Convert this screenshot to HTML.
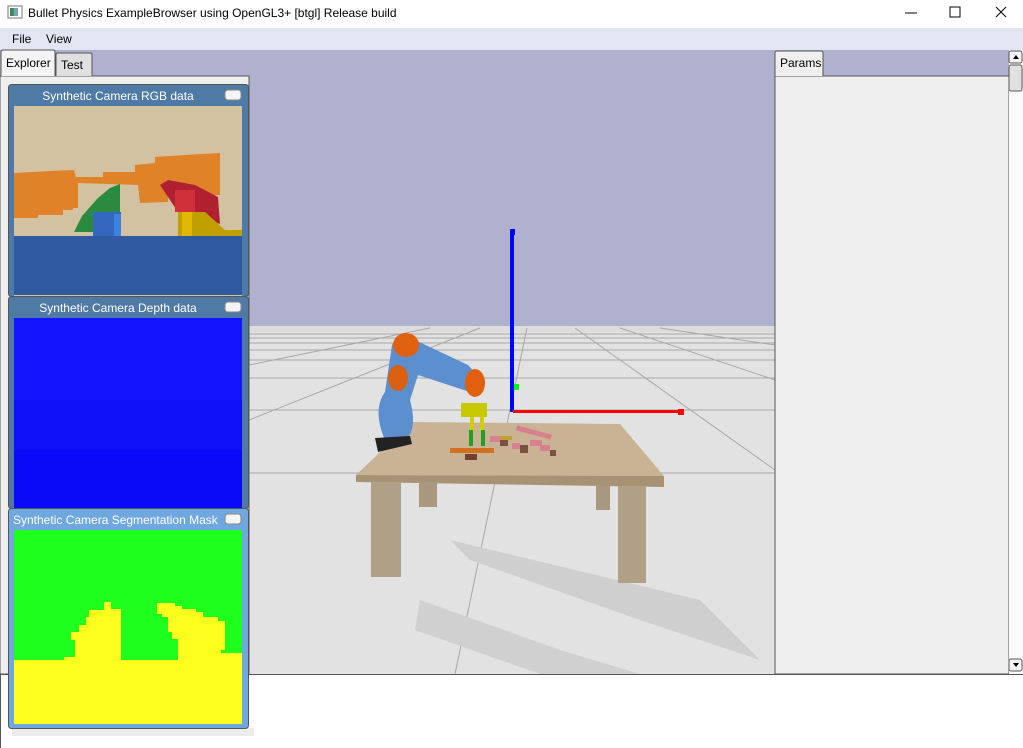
<!DOCTYPE html>
<html><head><meta charset="utf-8"><style>
html,body{margin:0;padding:0;width:1023px;height:748px;overflow:hidden;background:#fff;font-family:"Liberation Sans","Noto Sans CJK KR",sans-serif}
svg{display:block}
text{font-family:"Liberation Sans","Noto Sans CJK KR",sans-serif}
</style></head><body>
<svg width="1023" height="748" viewBox="0 0 1023 748" xmlns="http://www.w3.org/2000/svg">
<rect x="0" y="0" width="1023" height="28" fill="#fff"/>
<rect x="8" y="6" width="14" height="12" fill="#fff" stroke="#777"/>
<rect x="10" y="8" width="4" height="8" fill="#3a8a5a"/><rect x="14" y="8" width="4" height="8" fill="#7aa0c0"/>
<text x="28" y="17" font-size="12" fill="#000">Bullet Physics ExampleBrowser using OpenGL3+ [btgl] Release build</text>
<line x1="905" y1="13" x2="917" y2="13" stroke="#000"/>
<rect x="950" y="7" width="10" height="10" fill="none" stroke="#000"/>
<path d="M996 7 L1006 17 M1006 7 L996 17" stroke="#000"/>
<rect x="0" y="28" width="1023" height="22" fill="#e3e6f2"/>
<text x="12" y="43" font-size="12">File</text>
<text x="46" y="43" font-size="12">View</text>
<rect x="0" y="50" width="1023" height="624" fill="#b0b0cf"/>
<polygon points="249,328 775,328 775,674 249,674" fill="#e2e2e2"/>
<rect x="249" y="326" width="526" height="6" fill="#dcdcdc"/>
<g stroke="#a8a8a8" stroke-width="1">
<line x1="249" y1="334" x2="775" y2="334"/><line x1="249" y1="338" x2="775" y2="338"/><line x1="249" y1="343" x2="775" y2="343"/>
<line x1="249" y1="350" x2="775" y2="350"/><line x1="249" y1="360" x2="775" y2="360"/><line x1="249" y1="378" x2="775" y2="378"/>
<line x1="249" y1="410" x2="775" y2="410"/><line x1="249" y1="473" x2="775" y2="473"/>
<line x1="527" y1="328" x2="455" y2="674"/><line x1="575" y1="328" x2="775" y2="470"/>
<line x1="620" y1="328" x2="775" y2="380"/><line x1="480" y1="328" x2="249" y2="420"/>
<line x1="430" y1="328" x2="249" y2="365"/><line x1="660" y1="328" x2="775" y2="345"/>
</g>
<polygon points="450,540 700,600 760,660 640,620 470,560" fill="#cfcfcf"/>
<polygon points="420,600 560,650 640,674 540,674 415,630" fill="#d0d0d0"/>
<polygon points="412,422 620,424 664,476 356,475" fill="#c9b394"/>
<polygon points="356,475 664,476 664,487 356,482" fill="#a89274"/>
<rect x="371" y="482" width="30" height="95" fill="#b0a088"/>
<rect x="618" y="486" width="28" height="97" fill="#b0a088"/>
<rect x="419" y="482" width="18" height="25" fill="#a89880"/>
<rect x="596" y="486" width="14" height="24" fill="#a89880"/>
<rect x="510" y="232" width="4" height="180" fill="#0000ff"/>
<rect x="510" y="229" width="5" height="6" fill="#00f"/>
<rect x="513" y="410" width="170" height="3" fill="#ff0000"/>
<rect x="678" y="409" width="6" height="6" fill="#f00"/>
<rect x="514" y="384" width="5" height="6" fill="#0f0"/>
<path d="M392 345 Q398 332 415 340 L468 365 Q482 378 470 392 L418 375 L410 400 Q418 430 405 440 L385 440 Q372 410 385 392 Z" fill="#5b8fd0"/>
<ellipse cx="406" cy="345" rx="13" ry="12" fill="#e06010"/>
<ellipse cx="398" cy="378" rx="10" ry="13" fill="#d86010"/>
<ellipse cx="475" cy="383" rx="10" ry="14" fill="#e06010"/>
<path d="M375 438 L410 436 L412 444 L378 452 Z" fill="#222"/>
<rect x="461" y="403" width="26" height="14" fill="#c8c800"/>
<rect x="470" y="417" width="4" height="14" fill="#d0d000"/><rect x="480" y="417" width="4" height="14" fill="#d0d000"/>
<rect x="469" y="430" width="4" height="16" fill="#20a020"/><rect x="481" y="430" width="4" height="16" fill="#20a020"/>
<rect x="450" y="448" width="44" height="5" fill="#d07020"/>
<rect x="465" y="454" width="12" height="6" fill="#704030"/>
<g fill="#d88090"><rect x="516" y="430" width="36" height="5" transform="rotate(15 534 432)"/><rect x="530" y="440" width="12" height="6"/><rect x="540" y="445" width="10" height="6"/><rect x="490" y="436" width="10" height="6"/><rect x="512" y="443" width="8" height="6"/></g>
<g fill="#c0a030"><rect x="500" y="436" width="12" height="4"/></g>
<g fill="#7a5040"><rect x="500" y="440" width="8" height="6"/><rect x="520" y="445" width="8" height="8"/><rect x="550" y="450" width="6" height="6"/></g>
<rect x="0" y="76" width="249" height="598" fill="#efefef" stroke="#555"/>
<path d="M1 76 V52 Q1 50 3 50 L53 50 Q55 50 55 52 V76" fill="#f4f4f4" stroke="#555"/>
<text x="6" y="67" font-size="12">Explorer</text>
<path d="M56 76 V55 Q56 53 58 53 L90 53 Q92 53 92 55 V76" fill="#e0e0e0" stroke="#555"/>
<text x="61" y="69" font-size="12">Test</text>
<rect x="775" y="76" width="234" height="598" fill="#efefef" stroke="#555"/>
<path d="M775 76 V53 Q775 51 777 51 L821 51 Q823 51 823 53 V76" fill="#efefef" stroke="#555"/>
<text x="780" y="67" font-size="12">Params</text>
<rect x="1009" y="50" width="14" height="624" fill="#fafafa"/>
<rect x="1009" y="51" width="13" height="12" rx="2" fill="#f4f4f4" stroke="#555"/>
<path d="M1013 59 L1016 55 L1019 59 Z" fill="#000"/>
<rect x="1009" y="65" width="13" height="26" rx="2" fill="#e0e0e0" stroke="#555"/>
<rect x="1009" y="659" width="13" height="12" rx="2" fill="#f4f4f4" stroke="#555"/>
<path d="M1013 663 L1016 667 L1019 663 Z" fill="#000"/>
<rect x="0" y="674" width="1023" height="74" fill="#fff"/>
<line x1="0" y1="674.5" x2="1023" y2="674.5" stroke="#555"/>
<line x1="0.5" y1="674" x2="0.5" y2="748" stroke="#555"/>
<rect x="12" y="728" width="242" height="8" fill="#ececec"/>
<!-- RGB -->
<rect x="8.5" y="84.5" width="240" height="212" rx="3" fill="#4f7aa6" stroke="#555"/>
<text x="118" y="100" font-size="12" fill="#fff" text-anchor="middle">Synthetic Camera RGB data</text>
<rect x="225" y="90" width="16" height="10" rx="3" fill="#f4f4f4" stroke="#888"/>
<rect x="14" y="106" width="228" height="190" fill="#d3c2a2"/>
<rect x="14" y="236" width="228" height="59" fill="#305aa0"/>
<polygon points="14,173 50,171 74,170 76,177 103,177 103,172 135,172 135,165 155,163 155,157 185,155 220,153 220,195 168,196 168,202 140,203 138,185 78,183 78,208 73,208 73,210 63,210 63,215 38,215 38,218 14,218" fill="#e08228"/>
<polygon points="74,232 82,216 98,198 110,188 120,184 120,232" fill="#2a8a40"/>
<rect x="93" y="212" width="28" height="24" fill="#3468c0"/>
<rect x="114" y="214" width="7" height="22" fill="#4080e0"/>
<polygon points="160,185 168,180 195,185 218,197 220,224 196,215 178,212" fill="#b02030"/>
<rect x="175" y="190" width="20" height="22" fill="#d03038"/>
<polygon points="178,212 205,212 225,230 242,230 242,236 178,236" fill="#c0a000"/>
<rect x="182" y="212" width="10" height="24" fill="#e0b800"/>
<!-- Depth -->
<rect x="8.5" y="296.5" width="240" height="212" rx="3" fill="#4f7aa6" stroke="#555"/>
<text x="118" y="312" font-size="12" fill="#fff" text-anchor="middle">Synthetic Camera Depth data</text>
<rect x="225" y="302" width="16" height="10" rx="3" fill="#f4f4f4" stroke="#888"/>
<rect x="14" y="318" width="228" height="190" fill="#1414ff"/>
<rect x="14" y="400" width="228" height="50" fill="#1010f8"/>
<rect x="14" y="450" width="228" height="58" fill="#0a0af8"/>
<!-- Seg -->
<rect x="8.5" y="508.5" width="240" height="220" rx="3" fill="#6fa8e0" stroke="#555"/>
<text x="13" y="524" font-size="12" fill="#fff">Synthetic Camera Segmentation Mask</text>
<rect x="225" y="514" width="16" height="10" rx="3" fill="#f4f4f4" stroke="#888"/>
<rect x="14" y="530" width="228" height="194" fill="#1eff1e"/>
<rect x="14" y="660" width="228" height="64" fill="#ffff1e"/>
<polygon points="64,660 64,657 75,657 75,640 71,640 71,632 79,632 79,625 86,625 86,617 89,617 89,610 104,610 104,602 111,602 111,609 121,609 121,660" fill="#ffff1e"/>
<polygon points="178,660 178,639 172,639 172,632 168,632 168,617 162,617 162,614 157,614 157,603 175,603 175,606 182,606 182,609 196,609 196,612 203,612 203,617 218,617 218,621 225,621 225,650 221,650 221,653 242,653 242,660" fill="#ffff1e"/>
</svg>
</body></html>
